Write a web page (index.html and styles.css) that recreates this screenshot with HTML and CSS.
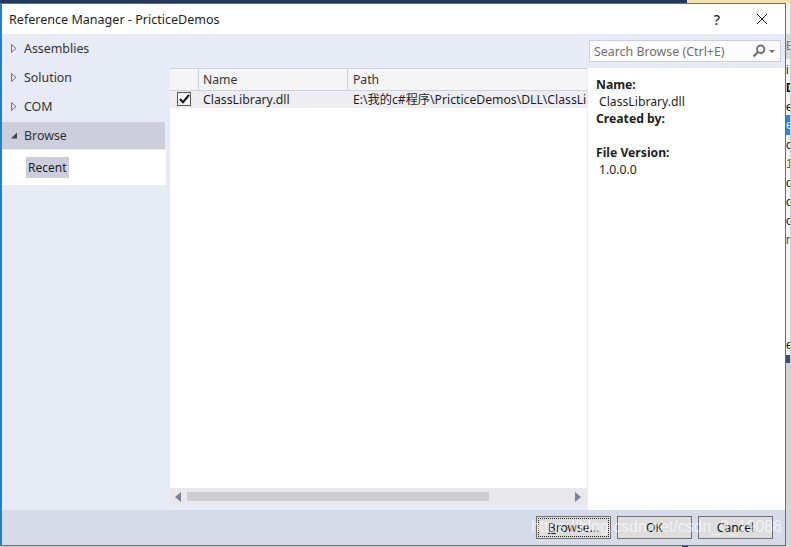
FILE: index.html
```html
<!DOCTYPE html>
<html lang="en">
<head>
<meta charset="utf-8">
<title>Reference Manager - PricticeDemos</title>
<link rel="stylesheet" href="styles.css">
</head>
<body>
<div class="desktop">
  <div class="topstrip"><div class="navy"></div><div class="cream"></div></div>
  <div class="sliver">
    <div class="sl sl-e">E</div>
    <div class="sl sl-i">i</div>
    <div class="sl sl-d">D</div>
    <div class="sl sl-e2">e</div>
    <div class="sl sl-sel">e</div>
    <div class="sl sl-c">c</div>
    <div class="sl sl-1">1</div>
    <div class="sl sl-p1">o</div>
    <div class="sl sl-p2">o</div>
    <div class="sl sl-p3">o</div>
    <div class="sl sl-r">r</div>
    <div class="sl sl-en">e</div>
    <div class="sl-dark"></div>
  </div>
  <div class="bottom-notch"></div>
  <div class="window">
    <header class="titlebar">
      <span class="title">Reference Manager - PricticeDemos</span>
      <span class="help">?</span>
      <svg class="close" width="12" height="12" viewBox="0 0 12 12"><path d="M1 1L11 11M11 1L1 11" stroke="#1e1e1e" stroke-width="1" fill="none"/></svg>
    </header>
    <div class="body">
      <nav class="nav">
        <div class="nav-item"><svg class="arrow" width="6" height="9" viewBox="0 0 6 9"><path d="M.5.5L5 4.5L.5 8.5Z" fill="#e6ebf5" stroke="#717171"/></svg>Assemblies</div>
        <div class="nav-item"><svg class="arrow" width="6" height="9" viewBox="0 0 6 9"><path d="M.5.5L5 4.5L.5 8.5Z" fill="#e6ebf5" stroke="#717171"/></svg>Solution</div>
        <div class="nav-item"><svg class="arrow" width="6" height="9" viewBox="0 0 6 9"><path d="M.5.5L5 4.5L.5 8.5Z" fill="#e6ebf5" stroke="#717171"/></svg>COM</div>
        <div class="nav-item nav-selected"><svg class="arrow" width="7" height="7" viewBox="0 0 7 7"><path d="M7 0V7H0Z" fill="#444"/></svg>Browse</div>
        <div class="nav-sub"><span class="chip">Recent</span></div>
      </nav>
      <main class="main">
        <div class="searchrow">
          <div class="search">
            <span class="search-text">Search Browse (Ctrl+E)</span>
            <svg class="lens" width="14" height="14" viewBox="0 0 14 14"><circle cx="8.7" cy="5.3" r="3.7" fill="none" stroke="#717171" stroke-width="2"/><path d="M6 8L1.5 12.5" stroke="#717171" stroke-width="2.4"/></svg>
            <span class="caret"></span>
          </div>
        </div>
        <div class="panes">
          <section class="list">
            <div class="thead">
              <div class="th th-check"></div>
              <div class="th th-name">Name</div>
              <div class="th th-path">Path</div>
            </div>
            <div class="row">
              <div class="cell-check"><span class="checkbox"><svg width="11" height="10" viewBox="0 0 11 10"><path d="M1 5L4 8.2L10 1" fill="none" stroke="#111" stroke-width="2"/></svg></span></div>
              <div class="cell-name">ClassLibrary.dll</div>
              <div class="cell-path">E:\我的c#程序\PricticeDemos\DLL\ClassLibrary.dll</div>
            </div>
            <div class="list-fill"></div>
            <div class="hscroll">
              <svg class="sb-arrow" width="6" height="10" viewBox="0 0 6 10"><path d="M6 0V10L0 5Z" fill="#7a8299"/></svg>
              <div class="track"><div class="thumb"></div></div>
              <svg class="sb-arrow" width="6" height="10" viewBox="0 0 6 10"><path d="M0 0V10L6 5Z" fill="#7a8299"/></svg>
            </div>
          </section>
          <aside class="details">
            <div class="d-label">Name:</div>
            <div class="d-value">ClassLibrary.dll</div>
            <div class="d-label">Created by:</div>
            <div class="d-blank"></div>
            <div class="d-label">File Version:</div>
            <div class="d-value">1.0.0.0</div>
          </aside>
        </div>
      </main>
    </div>
    <footer class="footer">
      <button class="btn btn-focus"><span class="focus-ring"><u>B</u>rowse...</span></button>
      <button class="btn">OK</button>
      <button class="btn">Cancel</button>
    </footer>
    <div class="watermark">https://blog.csdn.net/csdn_0_19086</div>
  </div>
</div>
</body>
</html>
```
FILE: styles.css
```css
* { box-sizing: border-box; }
html, body { margin: 0; padding: 0; }
body { width: 791px; height: 547px; overflow: hidden; font-family: "Liberation Sans", "Noto Sans CJK SC", sans-serif; }
.desktop { position: relative; width: 791px; height: 547px; background: #cfcfcf; overflow: hidden; }
.topstrip { display: flex; height: 3px; }
.navy { width: 687px; background: #22385c; }
.cream { flex: 1; background: #f0e3b0; }
.bottom-notch { position: absolute; left: 682px; top: 546px; width: 6px; height: 1px; background: #22385c; }
.sliver { position: absolute; left: 786px; top: 3px; width: 5px; height: 544px; background: #f4f4f4; border-right: 1px solid #d0d0d0; overflow: hidden; font: 12px "Liberation Sans", sans-serif; color: #111; }
.sl { position: absolute; left: 0; line-height: 14px; height: 14px; width: 5px; overflow: hidden; }
.sl-e { top: 31px; height: 25px; line-height: 25px; background: #d8d8dc; width: 5px; color: #777; }
.sl-i { top: 60px; color: #333; }
.sl-d { top: 78px; font-weight: bold; }
.sl-e2 { top: 97px; }
.sl-sel { top: 112px; height: 20px; line-height: 20px; background: #2f83d9; color: #dfefff; }
.sl-c { top: 135px; }
.sl-1 { top: 154px; color: #a05a10; }
.sl-p1 { top: 173px; }
.sl-p2 { top: 192px; }
.sl-p3 { top: 211px; }
.sl-r { top: 230px; color: #7a3b00; }
.sl-en { top: 335px; }
.sl-dark { position: absolute; left: 0; top: 352px; width: 5px; height: 192px; background: linear-gradient(#3d4f6e 0, #3d4f6e 8px, #d4d4d4 8px, #d4d4d4 100%); }

.window { position: absolute; left: 0; top: 3px; width: 786px; height: 543px; border: 1px solid #1c83d4; border-left-width: 2px; background: #e6ebf5; display: flex; flex-direction: column; color: #1e1e1e; font-family: "Noto Sans", "Noto Sans CJK SC", sans-serif; font-size: 12px; }
.titlebar { height: 30px; flex: none; background: #fff; display: flex; align-items: center; padding: 0 17px 0 7px; }
.title { flex: 1; font-size: 12.55px; color: #1e1e1e; }
.help { font-size: 14px; font-weight: 500; margin-right: 36px; }
.body { flex: 1; display: flex; min-height: 0; }
.nav { width: 168px; flex: none; font-size: 12.4px; }
.nav-item { height: 29px; display: flex; align-items: center; padding-left: 9px; color: #333; width: 163px; }
.nav-item .arrow { width: 6px; margin-right: 7px; flex: none; }
.nav-selected { height: 27px; background: #cccedb; margin-top: 1px; margin-bottom: 1px; }
.nav-sub { width: 164px; height: 35px; background: #fff; padding: 7px 0 0 24px; }
.chip { display: inline-block; height: 21px; line-height: 22px; padding: 0 2px; background: #cccedb; font-size: 12px; }
.main { flex: 1; display: flex; flex-direction: column; min-width: 0; }
.searchrow { height: 34px; flex: none; display: flex; justify-content: flex-end; padding: 6px 4px 0 0; }
.search { width: 192px; height: 22px; background: #fcfcfc; border: 1px solid #cbcfdc; display: flex; align-items: center; padding: 0 4px; }
.search-text { flex: 1; color: #717171; font-size: 12.4px; white-space: nowrap; }
.lens { margin-right: 3px; flex: none; }
.caret { width: 0; height: 0; border-left: 3px solid transparent; border-right: 3px solid transparent; border-top: 3px solid #717171; margin-right: 1px; }
.panes { flex: 1; display: flex; min-height: 0; }
.list { width: 417px; flex: none; background: #fff; display: flex; flex-direction: column; overflow: hidden; margin-bottom: 5px; margin-left: 0; border-top: 1px solid #cfd2de; }
.thead { height: 22px; flex: none; display: flex; background: #f5f5f5; border-bottom: 1px solid #cfd2de; }
.th { height: 21px; line-height: 21px; font-size: 12.2px; color: #333; border-right: 1px solid #cfd2de; padding-left: 4px; }
.th-check { width: 29px; }
.th-name { width: 149px; }
.th-path { flex: 1; border-right: 0; padding-left: 5px; }
.row { height: 17px; flex: none; display: flex; background: #eeeef2; white-space: nowrap; font-size: 12.3px; line-height: 17px; color: #1e1e1e; }
.cell-check { width: 29px; flex: none; padding: 1px 0 0 7px; }
.checkbox { display: flex; width: 14px; height: 14px; border: 1px solid #555; background: #f5f5f5; align-items: center; justify-content: center; }
.cell-name { width: 149px; flex: none; padding-left: 4px; }
.cell-path { flex: 1; overflow: hidden; padding-left: 5px; font-size: 12.2px; }
.list-fill { flex: 1; }
.hscroll { height: 17px; flex: none; background: #e8e8ec; display: flex; align-items: center; padding: 0 6px 0 5px; gap: 6px; }
.sb-arrow { flex: none; }
.track { flex: 1; height: 9px; }
.thumb { width: 302px; height: 9px; background: #cdcdd1; }
.details { flex: 1; background: #fff; border-left: 1px solid #e6ebf5; padding: 8px 0 0 8px; font-size: 12.2px; line-height: 17px; color: #1e1e1e; }
.d-label { font-weight: 700; height: 17px; }
.d-value { padding-left: 3px; height: 17px; }
.d-blank { height: 17px; }
.footer { height: 35px; flex: none; background: #d6dbe9; display: flex; justify-content: flex-end; gap: 6px; padding: 6px 12px 0 0; }
.btn { width: 75px; height: 23px; background: #dddddd; border: 1px solid #707070; padding: 1px; font-family: "Noto Sans", sans-serif; font-size: 12px; color: #111; }
.focus-ring { display: flex; align-items: center; justify-content: center; height: 100%; border: 1px dotted #222; white-space: pre; }
.watermark { position: absolute; left: 529px; top: 514px; font-family: "Liberation Sans", sans-serif; font-size: 15.9px; color: rgba(255,255,255,0.62); white-space: nowrap; pointer-events: none; }
```
